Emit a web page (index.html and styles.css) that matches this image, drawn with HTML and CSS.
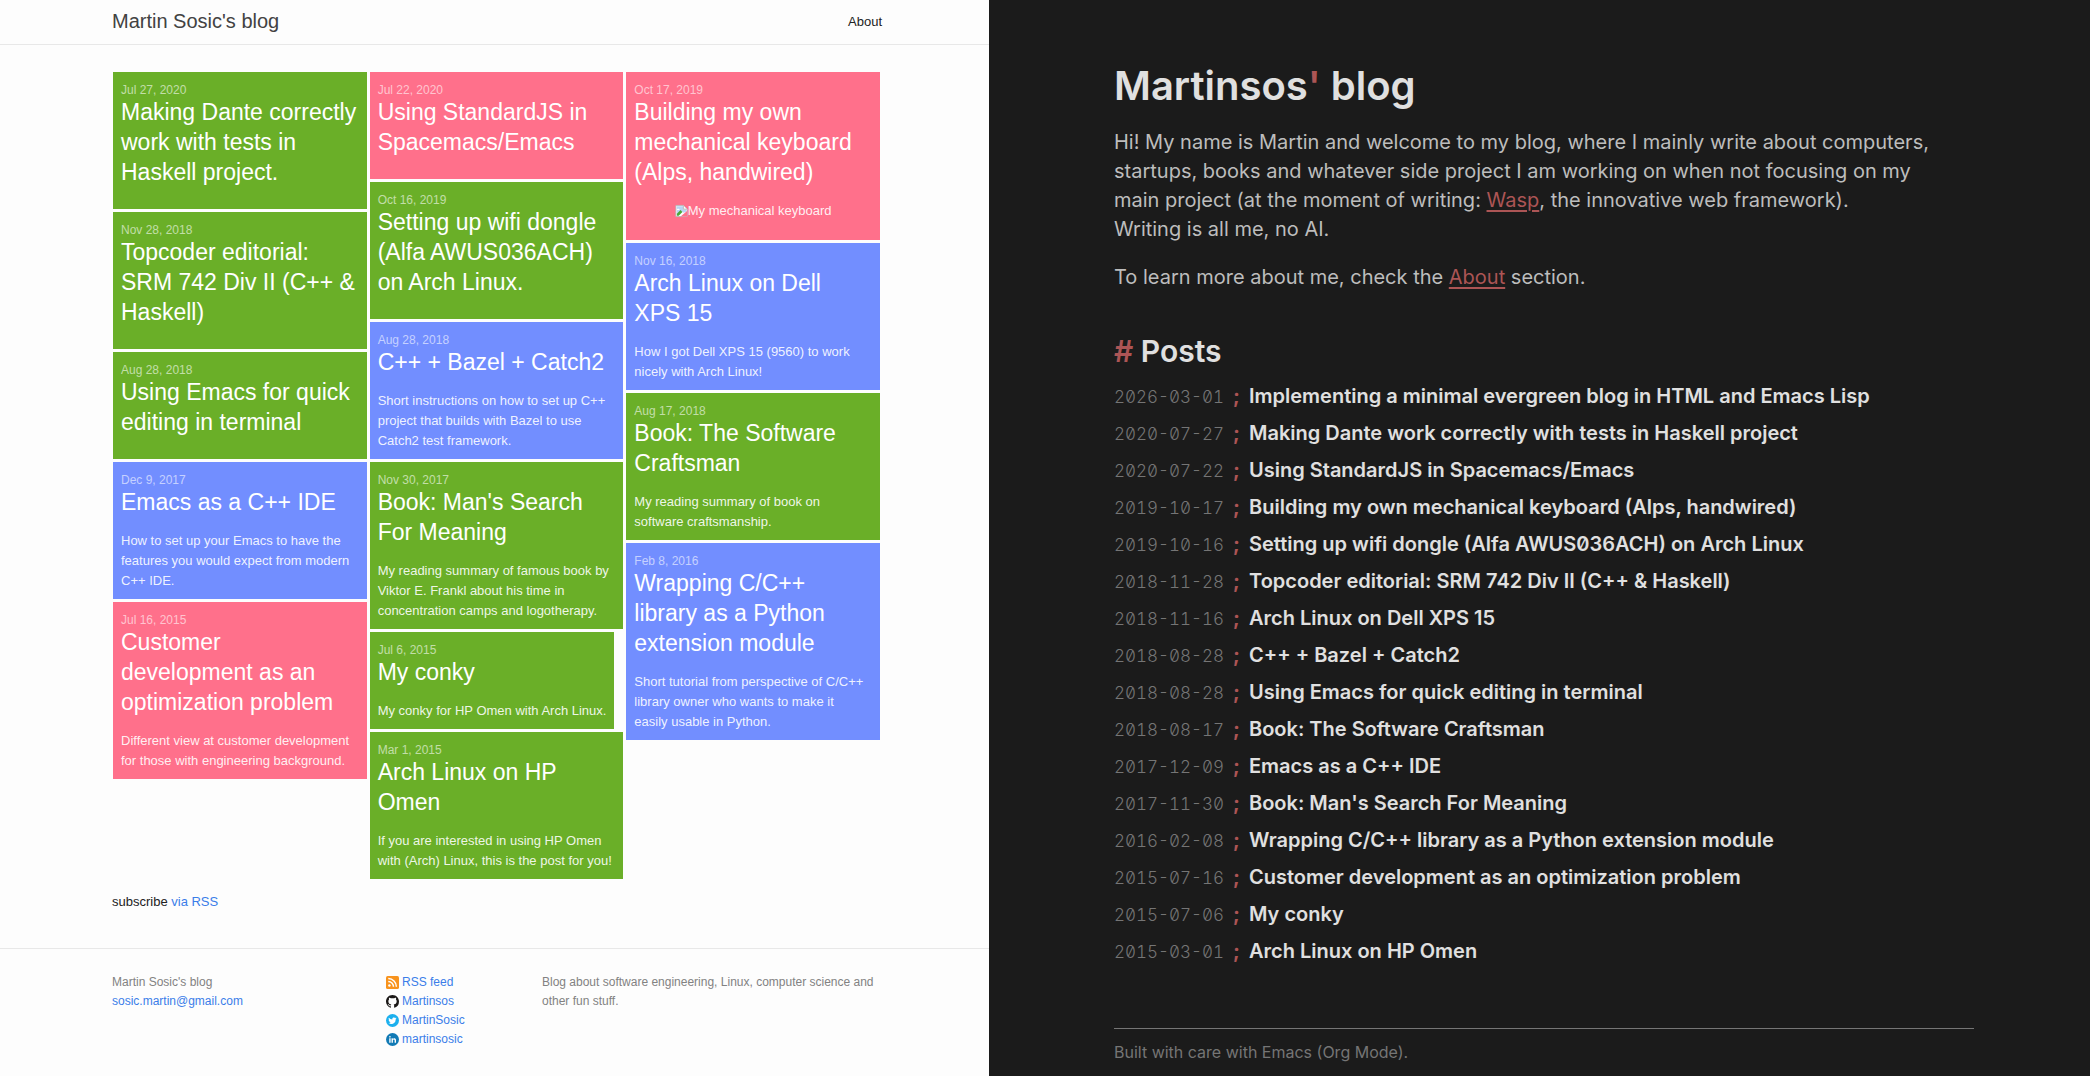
FILE: index.html
```html
<!DOCTYPE html>
<html lang="en">
<head>
<meta charset="utf-8">
<meta name="viewport" content="width=device-width, initial-scale=1">
<title>Martin Sosic's blog</title>
<link rel="stylesheet" href="styles.css">
</head>
<body>
<div class="split">
  <div class="classic">
    <header class="site-header">
      <a class="site-title" href="#">Martin Sosic's blog</a>
      <nav><a class="nav-link" href="#">About</a></nav>
    </header>
    <main class="classic-main">
      <div class="cards">
        <div class="card-column">
          <article class="card green"><time class="card-date">Jul 27, 2020</time><h2 class="card-title"><a href="#">Making Dante correctly work with tests in Haskell project.</a></h2></article>
          <article class="card green"><time class="card-date">Nov 28, 2018</time><h2 class="card-title"><a href="#">Topcoder editorial: SRM 742 Div II (C++ &amp; Haskell)</a></h2></article>
          <article class="card green"><time class="card-date">Aug 28, 2018</time><h2 class="card-title"><a href="#">Using Emacs for quick editing in terminal</a></h2></article>
          <article class="card blue"><time class="card-date">Dec 9, 2017</time><h2 class="card-title"><a href="#">Emacs as a C++ IDE</a></h2><p class="card-text">How to set up your Emacs to have the features you would expect from modern C++ IDE.</p></article>
          <article class="card pink"><time class="card-date">Jul 16, 2015</time><h2 class="card-title"><a href="#">Customer development as an optimization problem</a></h2><p class="card-text">Different view at customer development for those with engineering background.</p></article>
        </div>
        <div class="card-column">
          <article class="card pink"><time class="card-date">Jul 22, 2020</time><h2 class="card-title"><a href="#">Using StandardJS in Spacemacs/Emacs</a></h2></article>
          <article class="card green"><time class="card-date">Oct 16, 2019</time><h2 class="card-title"><a href="#">Setting up wifi dongle (Alfa AWUS036ACH) on Arch Linux.</a></h2></article>
          <article class="card blue"><time class="card-date">Aug 28, 2018</time><h2 class="card-title"><a href="#">C++ + Bazel + Catch2</a></h2><p class="card-text">Short instructions on how to set up C++ project that builds with Bazel to use Catch2 test framework.</p></article>
          <article class="card green"><time class="card-date">Nov 30, 2017</time><h2 class="card-title"><a href="#">Book: Man's Search For Meaning</a></h2><p class="card-text">My reading summary of famous book by Viktor E. Frankl about his time in concentration camps and logotherapy.</p></article>
          <article class="card green card-fit"><time class="card-date">Jul 6, 2015</time><h2 class="card-title"><a href="#">My conky</a></h2><p class="card-text">My conky for HP Omen with Arch Linux.</p></article>
          <article class="card green"><time class="card-date">Mar 1, 2015</time><h2 class="card-title"><a href="#">Arch Linux on HP Omen</a></h2><p class="card-text">If you are interested in using HP Omen with (Arch) Linux, this is the post for you!</p></article>
        </div>
        <div class="card-column">
          <article class="card pink"><time class="card-date">Oct 17, 2019</time><h2 class="card-title"><a href="#">Building my own mechanical keyboard (Alps, handwired)</a></h2>
            <p class="card-text card-image"><svg class="missing" viewBox="0 0 14 14" aria-hidden="true"><path d="M1 1h8l4 4v8H1z" fill="#fff" stroke="#b9b9b9"/><path d="M2 2h7v3h3v3l-3 1-2-2-5 4z" fill="#b9d4f5"/><path d="M2 6c0-2 3-2 3 0z" fill="#fff"/><path d="M2 12v-2l4-4 2 2-4 4z" fill="#4aa83a"/><path d="M6 13l7-6v6z" fill="#ff708b"/><path d="M9 1v4h4" fill="#fff" stroke="#b9b9b9"/></svg>My mechanical keyboard</p></article>
          <article class="card blue"><time class="card-date">Nov 16, 2018</time><h2 class="card-title"><a href="#">Arch Linux on Dell XPS 15</a></h2><p class="card-text">How I got Dell XPS 15 (9560) to work nicely with Arch Linux!</p></article>
          <article class="card green"><time class="card-date">Aug 17, 2018</time><h2 class="card-title"><a href="#">Book: The Software Craftsman</a></h2><p class="card-text">My reading summary of book on software craftsmanship.</p></article>
          <article class="card blue"><time class="card-date">Feb 8, 2016</time><h2 class="card-title"><a href="#">Wrapping C/C++ library as a Python extension module</a></h2><p class="card-text">Short tutorial from perspective of C/C++ library owner who wants to make it <br>easily usable in Python.</p></article>
        </div>
      </div>
      <p class="subscribe">subscribe <a href="#">via RSS</a></p>
    </main>
    <footer class="site-footer">
      <div>Martin Sosic's blog<br><a href="#">sosic.martin@gmail.com</a></div>
      <ul class="social">
        <li><svg class="icon" viewBox="0 0 16 16" aria-hidden="true"><rect width="16" height="16" rx="2" fill="#f8931d"/><circle cx="4.2" cy="11.8" r="1.5" fill="#fff"/><path d="M2.8 6.8a6.4 6.4 0 0 1 6.4 6.4M2.8 3.2a10 10 0 0 1 10 10" fill="none" stroke="#fff" stroke-width="1.8"/></svg><a href="#">RSS feed</a></li>
        <li><svg class="icon" viewBox="0 0 16 16" aria-hidden="true"><path fill="#1b1817" d="M8 0C3.58 0 0 3.58 0 8c0 3.54 2.29 6.53 5.47 7.59.4.07.55-.17.55-.38 0-.19-.01-.82-.01-1.49-2.01.37-2.53-.49-2.69-.94-.09-.23-.48-.94-.82-1.13-.28-.15-.68-.52-.01-.53.63-.01 1.08.58 1.23.82.72 1.21 1.87.87 2.33.66.07-.52.28-.87.51-1.07-1.78-.2-3.64-.89-3.64-3.95 0-.87.31-1.59.82-2.15-.08-.2-.36-1.02.08-2.12 0 0 .67-.21 2.2.82a7.6 7.6 0 0 1 4 0c1.53-1.04 2.2-.82 2.2-.82.44 1.1.16 1.92.08 2.12.51.56.82 1.27.82 2.15 0 3.07-1.87 3.75-3.65 3.95.29.25.54.73.54 1.48 0 1.07-.01 1.93-.01 2.2 0 .21.15.46.55.38A8.01 8.01 0 0 0 16 8c0-4.42-3.58-8-8-8z"/></svg><a href="#">Martinsos</a></li>
        <li><svg class="icon" viewBox="0 0 16 16" aria-hidden="true"><circle cx="8" cy="8" r="8" fill="#1cb0ee"/><path fill="#fff" d="M13 5.2c-.4.2-.8.3-1.2.4.4-.3.7-.7.9-1.2-.4.2-.8.4-1.3.5a2.1 2.1 0 0 0-3.6 1.9 6 6 0 0 1-4.3-2.2 2.1 2.1 0 0 0 .6 2.8c-.3 0-.7-.1-.9-.3 0 1 .7 1.9 1.7 2.1-.3.1-.6.1-.9 0 .3.9 1.1 1.5 2 1.5A4.3 4.3 0 0 1 3 11.5a6 6 0 0 0 9.1-5.3c.4-.3.7-.6.9-1z"/></svg><a href="#">MartinSosic</a></li>
        <li><svg class="icon" viewBox="0 0 16 16" aria-hidden="true"><circle cx="8" cy="8" r="8" fill="#117ab5"/><path fill="#fff" d="M4 6.5h1.7V12H4zM6.8 6.5h1.6v.8c.7-1.3 3.9-1.4 3.9 1.4V12h-1.7V9c0-1.6-2.1-1.4-2.1.1V12H6.8z"/><circle cx="4.85" cy="4.7" r="1" fill="#fff"/></svg><a href="#">martinsosic</a></li>
      </ul>
      <p class="about-text">Blog about software engineering, Linux, computer science and other fun stuff.</p>
    </footer>
  </div>

  <div class="modern">
    <main>
      <h1 class="modern-title">Martinsos<span class="accent">'</span> blog</h1>
      <p class="intro">Hi! My name is Martin and welcome to my blog, where I mainly write about computers, <br>startups, books and whatever side project I am working on when not focusing on my <br>main project (at the moment of writing: <a href="#">Wasp</a>, the innovative web framework). <br>Writing is all me, no AI.</p>
      <p class="intro">To learn more about me, check the <a href="#">About</a> section.</p>
      <h2 class="posts-title"><span class="accent">#</span> Posts</h2>
      <ul class="posts">
        <li><time>2026-03-01</time><span class="accent">;</span><a href="#">Implementing a minimal evergreen blog in HTML and Emacs Lisp</a></li>
        <li><time>2020-07-27</time><span class="accent">;</span><a href="#">Making Dante work correctly with tests in Haskell project</a></li>
        <li><time>2020-07-22</time><span class="accent">;</span><a href="#">Using StandardJS in Spacemacs/Emacs</a></li>
        <li><time>2019-10-17</time><span class="accent">;</span><a href="#">Building my own mechanical keyboard (Alps, handwired)</a></li>
        <li><time>2019-10-16</time><span class="accent">;</span><a href="#">Setting up wifi dongle (Alfa AWUS036ACH) on Arch Linux</a></li>
        <li><time>2018-11-28</time><span class="accent">;</span><a href="#">Topcoder editorial: SRM 742 Div II (C++ &amp; Haskell)</a></li>
        <li><time>2018-11-16</time><span class="accent">;</span><a href="#">Arch Linux on Dell XPS 15</a></li>
        <li><time>2018-08-28</time><span class="accent">;</span><a href="#">C++ + Bazel + Catch2</a></li>
        <li><time>2018-08-28</time><span class="accent">;</span><a href="#">Using Emacs for quick editing in terminal</a></li>
        <li><time>2018-08-17</time><span class="accent">;</span><a href="#">Book: The Software Craftsman</a></li>
        <li><time>2017-12-09</time><span class="accent">;</span><a href="#">Emacs as a C++ IDE</a></li>
        <li><time>2017-11-30</time><span class="accent">;</span><a href="#">Book: Man's Search For Meaning</a></li>
        <li><time>2016-02-08</time><span class="accent">;</span><a href="#">Wrapping C/C++ library as a Python extension module</a></li>
        <li><time>2015-07-16</time><span class="accent">;</span><a href="#">Customer development as an optimization problem</a></li>
        <li><time>2015-07-06</time><span class="accent">;</span><a href="#">My conky</a></li>
        <li><time>2015-03-01</time><span class="accent">;</span><a href="#">Arch Linux on HP Omen</a></li>
      </ul>
    </main>
    <footer class="modern-footer">Built with care with Emacs (Org Mode).</footer>
  </div>
</div>
</body>
</html>
```
FILE: styles.css
```css
* { box-sizing: border-box; }

body { margin: 0; }

h1, h2, p, ul { margin: 0; padding: 0; font-weight: inherit; }

ul { list-style: none; }

.split {
  display: grid;
  grid-template-columns: 989fr 1101fr;
  min-height: 100vh;
}

/* Light, card based blog */
.classic {
  background: #fdfdfd;
  color: #222;
  font: 13px/20px "Liberation Sans", Arial, sans-serif;
}

.classic a { color: #3b7de9; text-decoration: none; }

.site-header {
  display: flex;
  justify-content: space-between;
  align-items: center;
  padding: 7px 107px 8px 112px;
  border-bottom: 1px solid #e8e8e8;
}

.classic .site-title { color: #424242; font-size: 20px; line-height: 29px; }

.classic .nav-link { color: #222; }

.classic-main { padding: 27px 107px 36px 112px; }

.cards {
  display: grid;
  grid-template-columns: repeat(3, 1fr);
  gap: 3px;
  padding: 0 2px 0 1px;
}

.card-column {
  display: flex;
  flex-direction: column;
  gap: 3px;
}

.card { padding: 11px 8px 8px; color: #fff; }

.card-fit { align-self: flex-start; }

.green { background: #6aaf28; }
.pink { background: #ff708b; }
.blue { background: #728eff; }

.card-date {
  display: block;
  color: rgba(255, 255, 255, 0.6);
  font-size: 12px;
  line-height: 14px;
}

.card-title { margin-bottom: 14px; font-size: 23px; line-height: 30px; }

.card-title a { color: #fff; }

.card-text { color: rgba(255, 255, 255, 0.9); }

.card-image {
  display: flex;
  justify-content: center;
  align-items: center;
  margin-bottom: 11px;
}

.missing { width: 13px; height: 14px; }

.subscribe { margin-top: 13px; }

.site-footer {
  display: grid;
  grid-template-columns: 274fr 156fr 340fr;
  padding: 24px 107px 20px 112px;
  border-top: 1px solid #e8e8e8;
  color: #828282;
  font-size: 12px;
  line-height: 19px;
}

.social li { display: flex; align-items: center; gap: 3px; }

.icon { width: 13px; height: 13px; }

/* Dark, text based blog */
.modern {
  display: flex;
  flex-direction: column;
  justify-content: space-between;
  padding: 60px 116px 13px 125px;
  background: #1b1b1b;
  color: #bdbdbd;
  font: 20px/29px Inter, sans-serif;
  font-feature-settings: "zero" 1;
}

.accent { color: #ac5555; }

.modern-title {
  margin-bottom: 16px;
  color: #e0e0e0;
  font-size: 40px;
  font-weight: 600;
  line-height: 52px;
}

.intro { margin-bottom: 19px; }

.intro a { color: #ac5555; text-underline-offset: 3px; }

.posts-title {
  margin: 39px 0 11px;
  color: #e0e0e0;
  font-size: 30px;
  font-weight: 600;
  line-height: 40px;
}

.posts { display: grid; gap: 7px; }

.posts li {
  display: grid;
  grid-template-columns: 119px 16px 1fr;
  align-items: baseline;
}

.posts time {
  color: #757575;
  font-size: 17px;
  font-weight: 300;
  font-feature-settings: "zero" 1, "tnum" 1;
}

.posts .accent { font-weight: 700; }

.posts a { color: #e0e0e0; font-weight: 600; text-decoration: none; }

.modern-footer {
  padding-top: 12px;
  border-top: 1px solid #757575;
  color: #757575;
  font-size: 16px;
  line-height: 22px;
}
```
